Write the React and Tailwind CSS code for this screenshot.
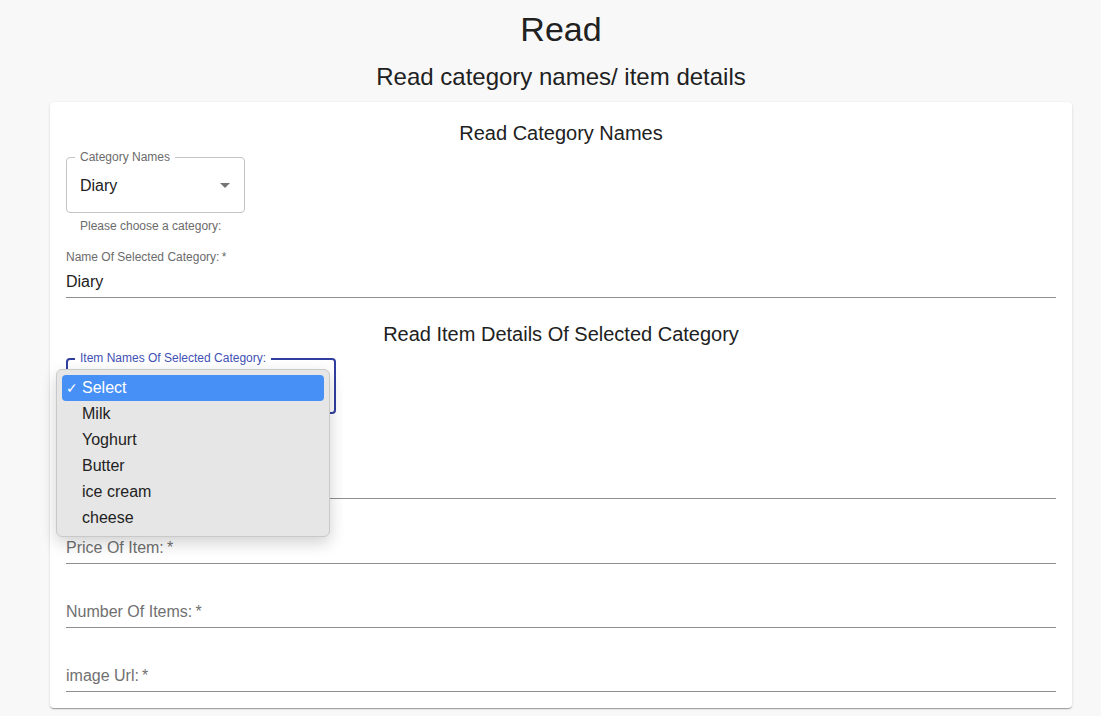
import React from "react";

const options = ["Select", "Milk", "Yoghurt", "Butter", "ice cream", "cheese"];

function Arrow() {
  return (
    <svg width="24" height="24" viewBox="0 0 24 24" className="absolute right-[7px] top-1/2 -translate-y-1/2">
      <path d="M7 10l5 5 5-5z" fill="#757575" />
    </svg>
  );
}

function EmptyField({ label, h = "h-[64px]" }) {
  return (
    <div className={`${h} flex items-end border-b border-[#8f8f8f] pb-[4px]`}>
      {label && <span className="text-[16px] leading-[23px] text-[#707070]">{label}{"\u2009*"}</span>}
    </div>
  );
}

export default function App() {
  return (
    <div className="min-h-screen bg-[#f8f8f8] font-['Liberation_Sans',Arial,sans-serif] text-[#212121]">
      <div className="flex flex-col pl-[50px] pr-[29px]">
        <h1 className="pt-[8px] text-center text-[34px] leading-[42px]">Read</h1>
        <h2 className="mt-[11px] text-center text-[24px] leading-[32px]">Read category names/ item details</h2>
        <div className="mt-[9px] flex flex-col rounded-[4px] bg-white px-[16px] pt-[15px] pb-[16px] shadow-[0_2px_1px_-1px_rgba(0,0,0,0.2),0_1px_1px_0_rgba(0,0,0,0.14),0_1px_3px_0_rgba(0,0,0,0.12)]">
          <h3 className="text-center text-[20px] leading-[32px]">Read Category Names</h3>

          <div className="relative mt-[8px] flex h-[56px] w-[179px] items-center rounded-[4px] border border-[#c4c4c4] pl-[13px]">
            <span className="absolute left-[8px] top-[-8px] bg-white px-[5px] text-[12px] leading-[14px] text-[#6b6b6b]">Category Names</span>
            <span className="text-[16px] leading-[23px]">Diary</span>
            <Arrow />
          </div>
          <p className="ml-[14px] mt-[3px] text-[12px] leading-[20px] text-[#6b6b6b]">Please choose a category:</p>

          <div className="mt-[14px] flex flex-col gap-[6px] border-b border-[#8f8f8f] pb-[4px]">
            <div className="text-[12px] leading-[14px] text-[#6b6b6b]">Name Of Selected Category:{"\u2009*"}</div>
            <div className="text-[16px] leading-[23px]">Diary</div>
          </div>

          <h3 className="mt-[20px] text-center text-[20px] leading-[32px]">Read Item Details Of Selected Category</h3>

          <div className="relative z-10 mt-[8px]">
            <div className="relative flex h-[56px] w-[270px] items-center rounded-[4px] border-2 border-[#303f9f] pl-[13px]">
              <span className="absolute left-[7px] top-[-9px] bg-white px-[5px] text-[12px] leading-[14px] text-[#3f51b5]">Item Names Of Selected Category:</span>
              <Arrow />
            </div>
            <div className="absolute left-[-10px] top-[11px] flex w-[274px] flex-col rounded-[6px] border border-[#c9c9c9] bg-[#e6e6e6] p-[5px] shadow-[0_6px_16px_rgba(0,0,0,0.18)]">
              {options.map((o, i) => (
                <div
                  key={o}
                  className={`relative flex h-[26px] items-center rounded-[4px] pl-[20px] text-[16px] ${i === 0 ? "bg-[#4690f6] text-white" : "text-[#222]"}`}
                >
                  {i === 0 && <span className="absolute left-[4px] text-[14px]">✓</span>}
                  {o}
                </div>
              ))}
            </div>
          </div>

          <EmptyField h="h-[85px]" />
          <EmptyField label="Price Of Item:" h="h-[65px]" />
          <EmptyField label="Number Of Items:" />
          <EmptyField label="image Url:" />
        </div>
      </div>
    </div>
  );
}
